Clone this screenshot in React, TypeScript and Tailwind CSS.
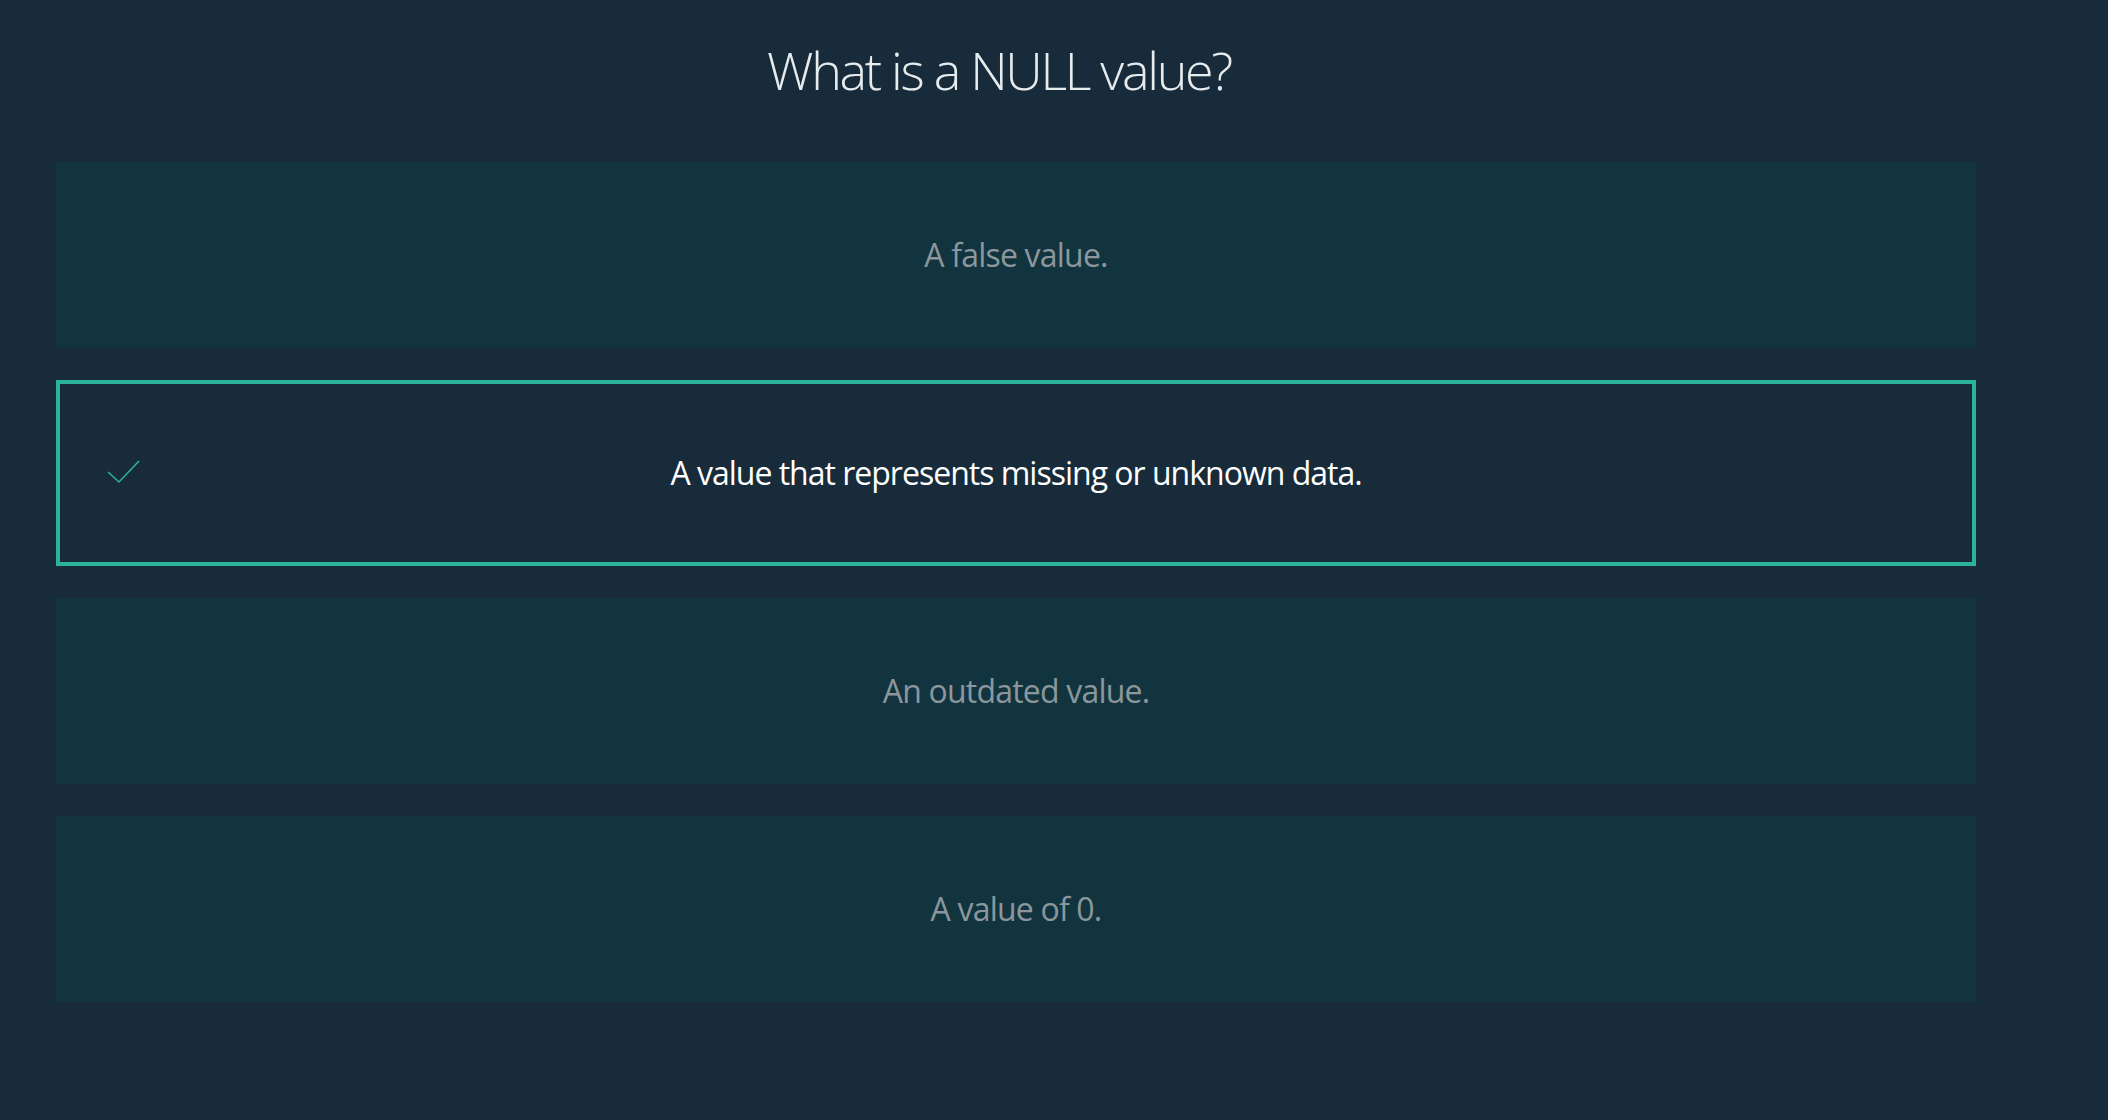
interface Option {
  label: string;
  selected?: boolean;
}

const options: Option[] = [
  { label: "A false value." },
  { label: "A value that represents missing or unknown data.", selected: true },
  { label: "An outdated value." },
  { label: "A value of 0." },
];

export default function App() {
  return (
    <main
      className="min-h-[1120px] w-full bg-[#172b3a] pl-[56px]"
      style={{ fontFamily: '"Open Sans", "Noto Sans", sans-serif' }}
    >
      <div className="w-[1920px]">
        {/* question */}
        <h1 className="pr-[34px] pt-[31px] pb-[53px] text-center text-[52px] leading-[78px] font-light tracking-[-2.3px] text-[#e6ebee]">
          What is a NULL value?
        </h1>

        {/* answers */}
        <div className="flex flex-col gap-[32px]">
          {options.map((opt) =>
            opt.selected ? (
              <div
                key={opt.label}
                className="relative flex h-[186px] items-center justify-center border-4 border-[#2db39a] bg-[#172b3a]"
              >
                <svg
                  className="absolute left-[44px] top-[74px]"
                  width="38"
                  height="28"
                  viewBox="0 0 38 28"
                  fill="none"
                >
                  <path
                    d="M4 14 L15 24 L35 3"
                    stroke="#2db39a"
                    strokeWidth="1.6"
                  />
                </svg>
                <span className="text-[32px] font-medium tracking-[-1px] text-white">
                  {opt.label}
                </span>
              </div>
            ) : (
              <div
                key={opt.label}
                className="flex h-[186px] items-center justify-center bg-[#12343f]"
              >
                <span className="text-[32px] font-normal tracking-[-0.8px] text-[#8b979c]">
                  {opt.label}
                </span>
              </div>
            )
          )}
        </div>
      </div>
    </main>
  );
}
